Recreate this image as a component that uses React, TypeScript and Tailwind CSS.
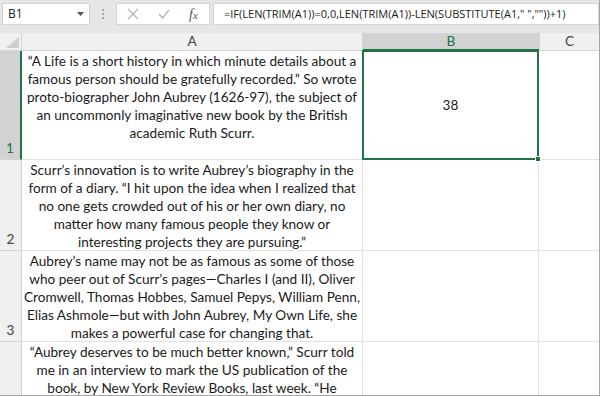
import React from "react";

const ROWS: { n: number; h: string; lines: string[] }[] = [
  {
    n: 1,
    h: "h-[109px]",
    lines: [
      "“A Life is a short history in which minute details about a",
      "famous person should be gratefully recorded.” So wrote",
      "proto-biographer John Aubrey (1626-97), the subject of",
      "an uncommonly imaginative new book by the British",
      "academic Ruth Scurr.",
    ],
  },
  {
    n: 2,
    h: "h-[91px]",
    lines: [
      "Scurr’s innovation is to write Aubrey’s biography in the",
      "form of a diary. “I hit upon the idea when I realized that",
      "no one gets crowded out of his or her own diary, no",
      "matter how many famous people they know or",
      "interesting projects they are pursuing.”",
    ],
  },
  {
    n: 3,
    h: "h-[91px]",
    lines: [
      "Aubrey’s name may not be as famous as some of those",
      "who peer out of Scurr’s pages—Charles I (and II), Oliver",
      "Cromwell, Thomas Hobbes, Samuel Pepys, William Penn,",
      "Elias Ashmole—but with John Aubrey, My Own Life, she",
      "makes a powerful case for changing that.",
    ],
  },
  {
    n: 4,
    h: "h-[91px]",
    lines: [
      "“Aubrey deserves to be much better known,” Scurr told",
      "me in an interview to mark the US publication of the",
      "book, by New York Review Books, last week. “He",
    ],
  },
];

const cellFont = "font-['Lato','Liberation_Sans',sans-serif] text-[13.6px] leading-[18px] text-[#1a1a1a]";

function FormulaBar() {
  return (
    <div className="flex h-[33px] items-start bg-[#e6e6e6] pt-[3px] font-['Open_Sans','Liberation_Sans',sans-serif]">
      <div className="ml-[2px] flex h-[22px] w-[88px] items-center justify-between border border-[#d4d4d4] bg-white pl-[5px] pr-[5px]">
        <span className="text-[12px] text-[#222]">B1</span>
        <svg width="7" height="4" viewBox="0 0 7 4">
          <path d="M0 0h7L3.5 4z" fill="#555" />
        </svg>
      </div>
      <div className="flex w-[26px] flex-col items-center gap-[2px] pt-[6px]">
        <span className="h-[2px] w-[2px] bg-[#a6a6a6]" />
        <span className="h-[2px] w-[2px] bg-[#a6a6a6]" />
        <span className="h-[2px] w-[2px] bg-[#a6a6a6]" />
      </div>
      <div className="flex h-[22px] w-[94px] items-center border border-[#d4d4d4] bg-white">
        <svg width="12" height="12" viewBox="0 0 12 12" className="ml-[10px]">
          <path d="M1 1l10 10M11 1L1 11" stroke="#b4b4b4" strokeWidth="1.2" fill="none" />
        </svg>
        <svg width="12" height="10" viewBox="0 0 12 10" className="ml-[19px]">
          <path d="M1 5l3.5 4L11 1" stroke="#b4b4b4" strokeWidth="1.3" fill="none" />
        </svg>
        <span className="ml-[19px] font-['Liberation_Serif',serif] text-[14px] italic text-[#555]">
          f<span className="text-[11px]">x</span>
        </span>
      </div>
      <div className="ml-[3px] flex h-[22px] flex-1 items-center border border-[#d4d4d4] bg-white pl-[10px]">
        <span className="whitespace-nowrap text-[11px] text-[#1a1a1a]">
          =IF(LEN(TRIM(A1))=0,0,LEN(TRIM(A1))-LEN(SUBSTITUTE(A1," ",""))+1)
        </span>
      </div>
    </div>
  );
}

function Headers() {
  return (
    <div className="flex h-[18px] bg-[#f0f0f0] font-['Lato','Liberation_Sans',sans-serif] text-[13.6px] text-[#444]">
      <div className="relative w-[22px] border-r border-b border-[#d4d4d4]">
        <svg width="13" height="11" viewBox="0 0 13 11" className="absolute bottom-[2px] right-[2px]">
          <path d="M13 0v11H0z" fill="#cfcfcf" />
        </svg>
      </div>
      <div className="flex w-[341px] items-center justify-center border-r border-b border-[#d4d4d4]">A</div>
      <div className="flex w-[176px] items-center justify-center border-b-2 border-[#217346] bg-[#d2d2d2] text-[#217346]">
        B
      </div>
      <div className="flex flex-1 items-center justify-center border-l border-b border-[#d4d4d4]">C</div>
    </div>
  );
}

export default function App() {
  return (
    <div className="h-[396px] w-[600px] overflow-hidden border-r border-b border-[#a6a6a6] bg-white">
      <FormulaBar />
      <Headers />
      <div className="relative">
        {ROWS.map((row) => {
          const selected = row.n === 1;
          return (
            <div key={row.n} className={`flex ${row.h}`}>
              <div
                className={`flex w-[22px] items-end justify-center border-b border-[#d4d4d4] pb-[1px] font-['Lato','Liberation_Sans',sans-serif] text-[13.6px] ${
                  selected ? "border-r-2 border-r-[#217346] bg-[#d2d2d2] text-[#217346]" : "border-r bg-[#f0f0f0] text-[#444]"
                }`}
              >
                {/* row 4's number sits below the visible area */}
                {row.n < 4 ? row.n : ""}
              </div>
              <div className={`flex w-[341px] flex-col items-center border-r border-b border-[#e1e1e1] pt-[1px] ${cellFont}`}>
                {row.lines.map((l) => (
                  <div key={l} className="whitespace-nowrap">
                    {l}
                  </div>
                ))}
              </div>
              <div className={`flex w-[176px] items-center justify-center border-r border-b border-[#e1e1e1] ${cellFont}`}>
                {selected ? "38" : ""}
              </div>
              <div className="flex-1 border-b border-[#e1e1e1]" />
            </div>
          );
        })}
        {/* selection outline on B1 */}
        <div className="pointer-events-none absolute left-[362px] top-[-1px] h-[110px] w-[177px] border-2 border-[#217346]">
          <div className="absolute -bottom-[4px] -right-[4px] h-[6px] w-[6px] border border-white bg-[#217346]" />
        </div>
      </div>
    </div>
  );
}
